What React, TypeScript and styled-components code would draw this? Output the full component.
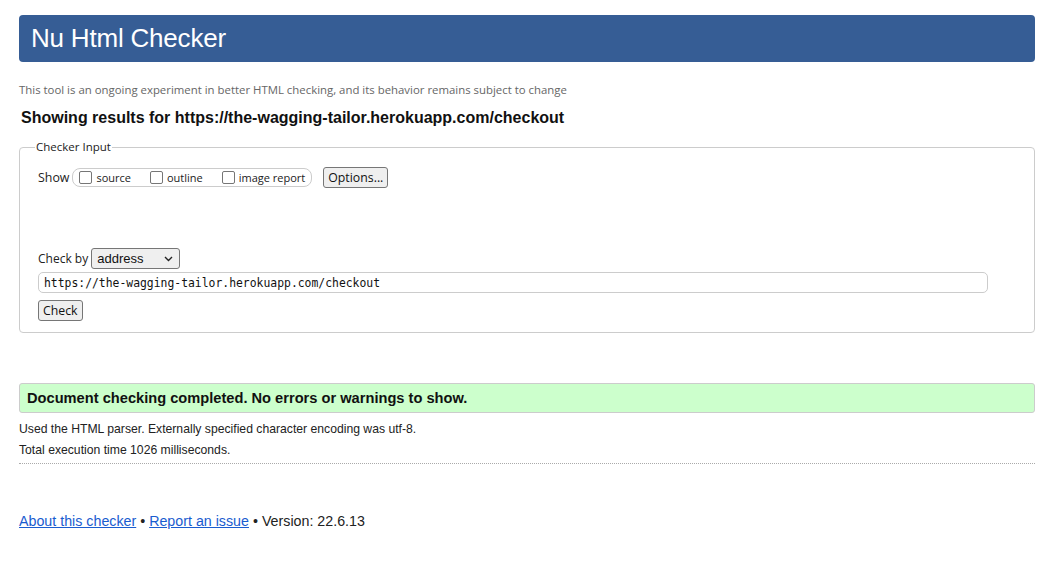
import React from "react";
import styled, { createGlobalStyle } from "styled-components";

const Global = createGlobalStyle`
  html, body { margin: 0; padding: 0; background: #fff; }
  body { font-family: "Liberation Sans", Arial, sans-serif; color: #222; }
`;

const Page = styled.div`
  padding: 15px 14px 0 19px;
  display: flex;
  flex-direction: column;
`;

const Header = styled.header`
  background: #365d95;
  border-radius: 4px;
  height: 47px;
  display: flex;
  align-items: center;
  padding-left: 12px;
`;

const Title = styled.h1`
  margin: 0;
  font-family: "Liberation Sans", Arial, sans-serif;
  font-weight: normal;
  font-size: 26px;
  color: #fff;
  letter-spacing: -0.2px;
`;

const Note = styled.p`
  margin: 20px 0 0 0;
  font-family: "Open Sans", "Noto Sans", sans-serif;
  font-size: 11.4px;
  color: #666;
  line-height: 15px;
`;

const Results = styled.h2`
  margin: 11px 0 0 2px;
  font-family: "Liberation Sans", Arial, sans-serif;
  font-size: 16px;
  font-weight: bold;
  color: #111;
  line-height: 20px;
`;

const Fieldset = styled.fieldset`
  margin: 11px 0 0 0;
  padding: 12px 18px 11px 18px;
  border: 1px solid #ccc;
  border-radius: 4px;
  font-family: "Open Sans", "Noto Sans", sans-serif;
  font-size: 12px;
  color: #222;
`;

const Legend = styled.legend`
  padding: 0 1px;
  margin-left: -3px;
  font-size: 11.5px;
  color: #222;
  line-height: 16px;
`;

const Row = styled.div<{ $mt?: number }>`
  display: flex;
  align-items: center;
  gap: 3px;
  margin-top: ${(p) => p.$mt ?? 0}px;
`;

const Label = styled.span<{ $size: number }>`
  font-size: ${(p) => p.$size}px;
  color: #222;
`;

const Pill = styled.span`
  display: inline-flex;
  align-items: center;
  height: 17px;
  border: 1px solid #ccc;
  border-radius: 8px;
  padding: 0 6px 0 6px;
  gap: 19px;
  margin-right: 8px;
`;

const CheckItem = styled.label`
  display: inline-flex;
  align-items: center;
  gap: 4px;
  font-size: 11px;
  color: #222;
`;

const Box = styled.span`
  width: 11px;
  height: 11px;
  border: 1px solid #767676;
  border-radius: 2px;
  background: #fff;
`;

const Button = styled.button`
  font-family: "Open Sans", "Noto Sans", sans-serif;
  font-size: 12.3px;
  color: #111;
  background: #efefef;
  border: 1px solid #767676;
  border-radius: 3px;
  height: 21px;
  padding: 0 4px;
  line-height: 17px;
`;

const Select = styled.span`
  display: inline-flex;
  align-items: center;
  justify-content: space-between;
  width: 89px;
  height: 21px;
  box-sizing: border-box;
  border: 1px solid #767676;
  border-radius: 3px;
  background: #efefef;
  padding: 0 6px 0 5px;
  font-family: "Liberation Sans", Arial, sans-serif;
  font-size: 13px;
  color: #111;
`;

const UrlInput = styled.div`
  width: 950px;
  height: 21px;
  box-sizing: border-box;
  border: 1px solid #ccc;
  border-radius: 5px;
  display: flex;
  align-items: center;
  padding-left: 5px;
  font-family: "DejaVu Sans Mono", "Liberation Mono", monospace;
  font-size: 11.4px;
  color: #111;
`;

const Spacer = styled.div`
  height: 60px;
`;

const Success = styled.div`
  margin-top: 50px;
  height: 30px;
  box-sizing: border-box;
  background: #ccffcc;
  border: 1px solid #ccc;
  border-radius: 3px;
  display: flex;
  align-items: center;
  padding-left: 7px;
  font-family: "Liberation Sans", Arial, sans-serif;
  font-weight: bold;
  font-size: 14.65px;
  color: #111;
`;

const Detail = styled.p<{ $mt: number }>`
  margin: ${(p) => p.$mt}px 0 0 0;
  font-size: 12.2px;
  line-height: 15px;
  color: #222;
`;

const Dotted = styled.hr`
  margin: 5px 0 0 0;
  border: none;
  border-top: 1px dotted #aaa;
  height: 0;
`;

const Footer = styled.p`
  margin: 49px 0 0 0;
  font-size: 14.25px;
  line-height: 17px;
  color: #222;
`;

const Link = styled.a`
  color: #1a5ccf;
  text-decoration: underline;
`;

export default function App() {
  return (
    <>
      <Global />
      <Page>
        <Header>
          <Title>Nu Html Checker</Title>
        </Header>
        <Note>
          This tool is an ongoing experiment in better HTML checking, and its behavior remains subject to change
        </Note>
        <Results>Showing results for https://the-wagging-tailor.herokuapp.com/checkout</Results>
        <Fieldset>
          <Legend>Checker Input</Legend>
          <Row>
            <Label $size={12.4}>Show</Label>
            <Pill>
              <CheckItem>
                <Box />
                source
              </CheckItem>
              <CheckItem>
                <Box />
                outline
              </CheckItem>
              <CheckItem>
                <Box />
                image report
              </CheckItem>
            </Pill>
            <Button>Options...</Button>
          </Row>
          <Spacer />
          <Row>
            <Label $size={12}>Check by</Label>
            <Select>
              address
              <svg width="9" height="6" viewBox="0 0 9 6">
                <path d="M1 1 L4.5 4.5 L8 1" fill="none" stroke="#222" strokeWidth="1.4" />
              </svg>
            </Select>
          </Row>
          <Row $mt={3}>
            <UrlInput>https://the-wagging-tailor.herokuapp.com/checkout</UrlInput>
          </Row>
          <Row $mt={7}>
            <Button>Check</Button>
          </Row>
        </Fieldset>
        <Success>Document checking completed. No errors or warnings to show.</Success>
        <Detail $mt={9}>Used the HTML parser. Externally specified character encoding was utf-8.</Detail>
        <Detail $mt={6}>Total execution time 1026 milliseconds.</Detail>
        <Dotted />
        <Footer>
          <Link href="#">About this checker</Link> • <Link href="#">Report an issue</Link> • Version: 22.6.13
        </Footer>
      </Page>
    </>
  );
}
